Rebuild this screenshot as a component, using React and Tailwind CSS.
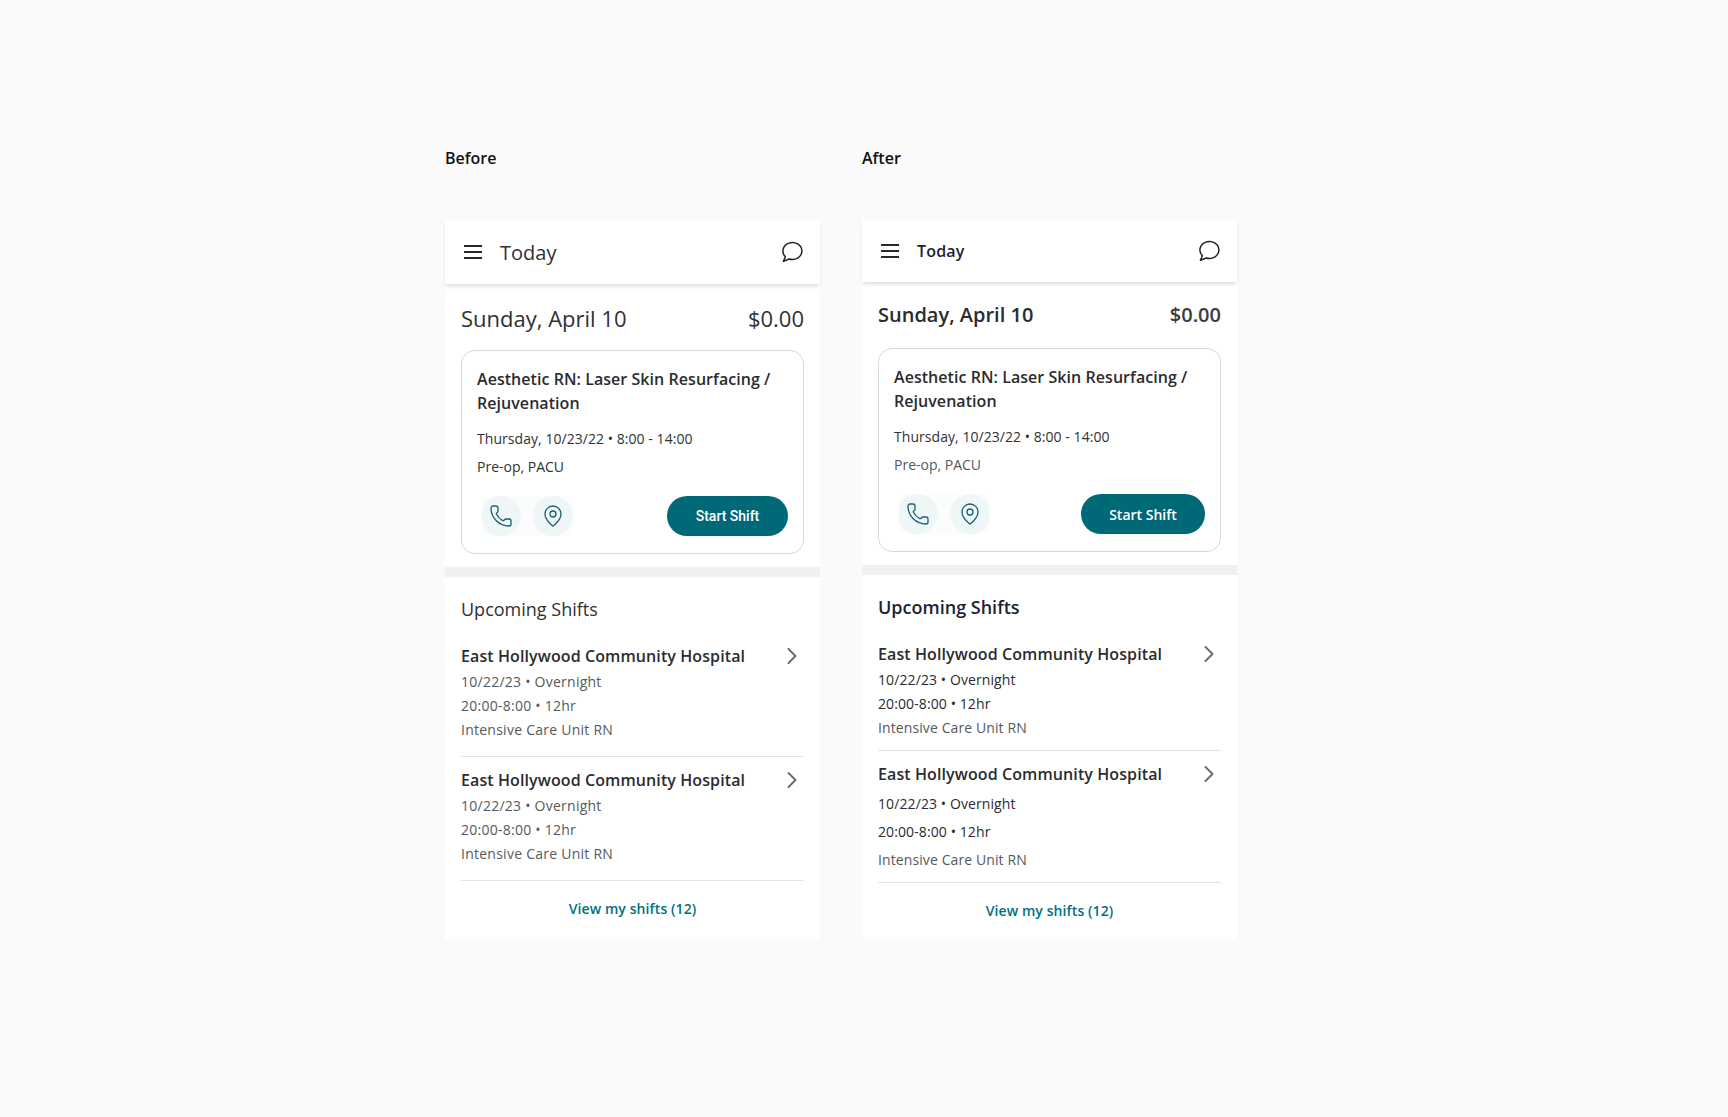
import { ChevronRight, MapPin, Phone } from "lucide-react";

const font = { fontFamily: '"Open Sans", sans-serif' };

function MenuIcon() {
  return (
    <svg width="24" height="24" viewBox="0 0 24 24" fill="none" stroke="#26282a" strokeWidth="2">
      <path d="M3 6h18M3 12h18M3 18h18" />
    </svg>
  );
}

function ChatIcon() {
  return (
    <svg width="24" height="24" viewBox="0 0 24 24" fill="none" stroke="#222" strokeWidth="1.5" strokeLinejoin="round">
      <path d="M9.3 19A9.5 8.5 0 1 0 5.4 16.7L3.4 21.3Z" />
    </svg>
  );
}

function ShiftRow({ rowClass, metaClass, firstLine, nextLine }) {
  return (
    <div className={rowClass}>
      <div className="flex h-6 items-center justify-between">
        <span className="text-[16px] leading-6 font-semibold tracking-[0.1px] text-[#2a2c2e]">
          East Hollywood Community Hospital
        </span>
        <ChevronRight size={28} strokeWidth={1.6} className="-mr-[2px] text-[#666a6d]" />
      </div>
      <p className={firstLine + " " + metaClass}>10/22/23 • Overnight</p>
      <p className={nextLine + " " + metaClass}>20:00-8:00 • 12hr</p>
      <p className={nextLine + " text-[#55595c]"}>Intensive Care Unit RN</p>
    </div>
  );
}

function Panel({ after }) {
  const metaClass = after ? "text-[#2a2c2e]" : "text-[#55595c]";
  const tracking = after ? "text-[14px] tracking-[0.1px]" : "text-[14px] tracking-[0.25px]";
  return (
    <div className="w-[375px]">
      <p className="mb-[50px] h-6 text-[16px] leading-6 font-semibold text-[#111]">
        {after ? "After" : "Before"}
      </p>
      <div className="bg-white">
        <header
          className={
            after
              ? "flex h-[62px] items-center justify-between px-4 shadow-[0_3px_4px_-1px_rgba(0,0,0,0.15)]"
              : "flex h-16 items-center justify-between px-4 shadow-[0_3px_4px_-1px_rgba(0,0,0,0.15)]"
          }
        >
          <div className="flex items-center gap-[15px]">
            <MenuIcon />
            {after ? (
              <span className="text-[16px] leading-6 font-semibold tracking-[0.2px] text-[#1c2236]">Today</span>
            ) : (
              <span className="pt-[2px] text-[20px] leading-7 text-[#2f3133]">Today</span>
            )}
          </div>
          <ChatIcon />
        </header>

        <div className={after ? "flex h-[66px] items-center justify-between px-4" : "flex h-[66px] items-center justify-between px-4 pt-[1px]"}>
          {after ? (
            <span className="text-[20px] leading-7 font-semibold text-[#2a2c2e]">Sunday, April 10</span>
          ) : (
            <span className="text-[22px] leading-7 text-[#2f3133]">Sunday, April 10</span>
          )}
          <span className={after ? "text-[20px] leading-7 font-semibold text-[#3a3c3e]" : "text-[22px] leading-7 text-[#2f3133]"}>
            $0.00
          </span>
        </div>

        <div className="mx-4 h-[204px] rounded-[14px] border border-[#d8d8d8] px-[15px] pt-[16px]">
          <h3 className="text-[16px] leading-6 font-semibold tracking-[0.05px] text-[#2a2c2e]">
            Aesthetic RN: Laser Skin Resurfacing / Rejuvenation
          </h3>
          <p className="mt-[12px] text-[14px] leading-6 tracking-[0.05px] text-[#2f3133]">
            Thursday, 10/23/22 • 8:00 - 14:00
          </p>
          <p className={after ? "mt-1 text-[14px] leading-6 text-[#55595c]" : "mt-1 text-[14px] leading-6 text-[#2f3133]"}>
            Pre-op, PACU
          </p>
          <div className="mt-[17px] flex items-center justify-between">
            <div className="ml-1 flex gap-3 bg-[#fbfdfd]">
              <span className="flex size-10 items-center justify-center rounded-full bg-[#eef6f8]">
                <Phone size={24} strokeWidth={1.3} className="text-[#1a6070]" />
              </span>
              <span className="flex size-10 items-center justify-center rounded-full bg-[#eef6f8]">
                <MapPin size={24} strokeWidth={1.3} className="text-[#1a6070]" />
              </span>
            </div>
            {after ? (
              <button className="h-10 w-[124px] rounded-full bg-[#006978] text-[14px] font-semibold text-white">
                Start Shift
              </button>
            ) : (
              <button className="h-10 w-[121px] rounded-full bg-[#006978] text-[14px] font-medium text-white [font-family:Roboto,sans-serif]">
                Start Shift
              </button>
            )}
          </div>
        </div>

        <div className="mt-[13px] h-[10px] bg-[#eff1f1]" />

        <div className="px-4">
          <h2
            className={
              after
                ? "mt-[18px] text-[18px] leading-7 font-semibold text-[#1c2236]"
                : "mt-[18px] text-[18px] leading-7 text-[#2f3133]"
            }
          >
            Upcoming Shifts
          </h2>
          <ShiftRow
            metaClass={metaClass}
            rowClass={
              after
                ? "mt-[21px] border-b border-[#dfe5ec] pb-[10px] " + tracking
                : "mt-[21px] border-b border-[#dfe5ec] pb-[14px] " + tracking
            }
            firstLine="mt-[2px] h-6 leading-6"
            nextLine="h-6 leading-6"
          />
          <ShiftRow
            metaClass={metaClass}
            rowClass={
              after
                ? "mt-[11px] border-b border-[#dfe5ec] pb-[10px] " + tracking
                : "mt-[11px] border-b border-[#dfe5ec] pb-[14px] " + tracking
            }
            firstLine={after ? "mt-[6px] h-6 leading-6" : "mt-[2px] h-6 leading-6"}
            nextLine={after ? "mt-1 h-6 leading-6" : "h-6 leading-6"}
          />
        </div>
        <div className={after ? "flex h-[56px] items-center justify-center pb-[2px]" : "flex h-[58px] items-center justify-center pb-1"}>
          <a className="text-[14px] font-semibold tracking-[0.1px] text-[#00717f]">View my shifts (12)</a>
        </div>
      </div>
    </div>
  );
}

export default function App() {
  return (
    <div style={font} className="flex min-h-[1117px] gap-[42px] bg-[#fafafa] pt-[146px] pl-[445px]">
      <Panel />
      <Panel after />
    </div>
  );
}
